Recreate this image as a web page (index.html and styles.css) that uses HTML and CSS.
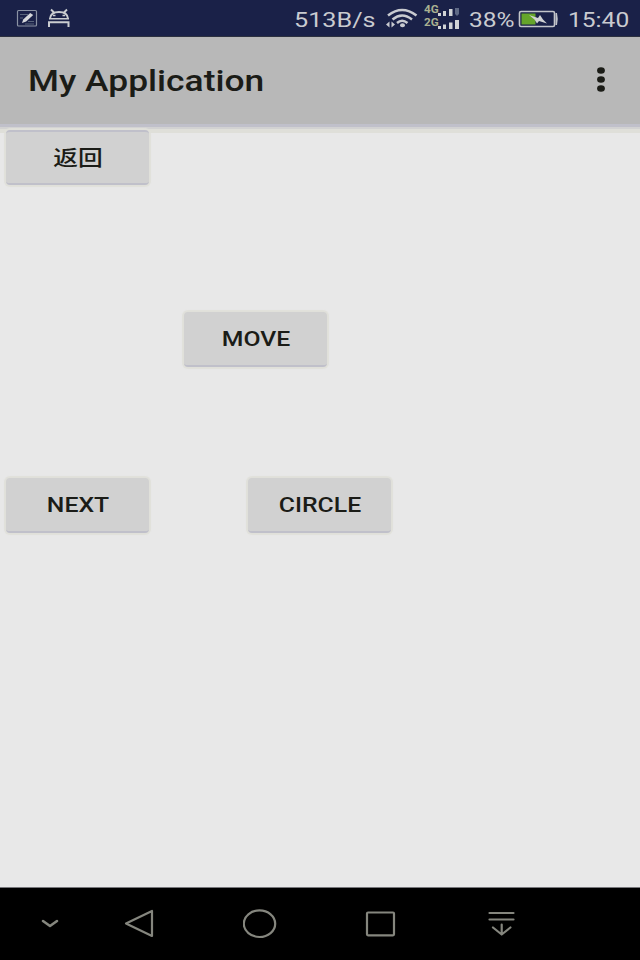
FILE: index.html
```html
<!DOCTYPE html>
<html lang="zh">
<head>
<meta charset="utf-8">
<title>My Application</title>
<link rel="stylesheet" href="styles.css">
</head>
<body>
<div class="screen">
  <header class="status">
    <svg class="notifications" width="72" height="37" viewBox="0 0 72 37" fill="none">
      <rect x="17.5" y="10.5" width="19" height="15.5" rx="1" stroke="#8b93a4" stroke-width="1.2"/>
      <path d="M20 14.5h8M20 18h3M28 21.5h6M25 24h9" stroke="#59647b"/>
      <path d="M22 23l1.200-3.500 7-6.500 3 2-7 6.500z" fill="#d5d7da"/>
      <path d="M50 18.500c.5-4.500 4-6.500 9-6.500s8.500 2 9 6.500M51 9.500l3.500 3.500M67 9.500l-3.500 3.500" stroke="#cacdd0" stroke-width="1.900"/>
      <path d="M53 15.500h2.500M62.500 15.500h2.500M49 18.800h20" stroke="#cacdd0" stroke-width="1.500"/>
      <path d="M49 27v-4.800h19.500v4.800" stroke="#cacdd0" stroke-width="2"/>
    </svg>
    <div class="speed"><span class="wide">513B/s</span></div>
    <svg class="wifi" width="34" height="37" viewBox="0 0 34 37" fill="none" stroke="#c9cbd0">
      <path d="M3 15.500Q17 4.500 31.500 15.500M7.500 19.500Q17 11.500 27 19.500M12 23Q17 18.500 22.500 23" stroke-width="2.500"/>
      <ellipse cx="17.500" cy="25.300" rx="2.500" ry="2" fill="#c9cbd0" stroke="none"/>
      <path d="M4.500 21.500v6l-3.500-3zM6.500 21.500v6l3.500-3z" fill="#c9cbd0" stroke="none"/>
    </svg>
    <div class="networks">
      <div class="network"><span>4G</span><svg width="24" height="12" viewBox="0 0 24 12"><path d="M0 8h3v3H0zM5 6h3v5H5zM11 4h3.500v7H11z" fill="#d1d3d5"/><path d="M17 3h4v6l-2 2-2-2z" fill="#5f6985"/></svg></div>
      <div class="network"><span>2G</span><svg width="24" height="12" viewBox="0 0 24 12"><path d="M0 8h3v3H0zM5 6.500h3V11H5zM11 4.500h3.500V11H11zM17 2h4v9h-4z" fill="#d1d3d5"/></svg></div>
    </div>
    <div class="percent"><span class="wide">38%</span></div>
    <svg class="battery" width="42" height="37" viewBox="0 0 42 37">
      <rect x="1.500" y="11.500" width="35" height="15" rx="1.500" fill="none" stroke="#c3c5ca" stroke-width="1.600"/>
      <path d="M3.500 13.500h14v11h-14z" fill="#65a52a"/>
      <path d="M37.500 13h1.500q1.500 6 0 12h-1.500z" fill="#c3c5ca"/>
      <path d="M11 15l9 3 2-3 3 4.500 4 4-8-2.500-2 2.500-2.500-4z" fill="#d0d2d3"/>
    </svg>
    <div class="clock"><span class="wide">15:40</span></div>
  </header>
  <div class="appbar">
    <h1>My Application</h1>
    <svg width="12" height="28" viewBox="0 0 12 28" fill="#1b1c17"><ellipse cx="6" cy="3.500" rx="3.900" ry="3.300"/><ellipse cx="6" cy="12.500" rx="3.900" ry="3.300"/><ellipse cx="6" cy="21.500" rx="3.900" ry="3.300"/></svg>
  </div>
  <main>
    <button class="back"><span>返回</span></button>
    <button class="move"><span>MOVE</span></button>
    <div class="row">
      <button><span>NEXT</span></button>
      <button><span>CIRCLE</span></button>
    </div>
  </main>
  <nav>
    <svg width="20" height="32" viewBox="0 0 20 32"><path d="M3 13l7 5 7-5" stroke-width="2.600"/></svg>
    <svg width="32" height="32" viewBox="0 0 32 32"><path d="M2 15.500L28 3v25z"/></svg>
    <svg width="36" height="32" viewBox="0 0 36 32"><ellipse cx="16.500" cy="15.700" rx="15.700" ry="13.300"/></svg>
    <svg width="32" height="32" viewBox="0 0 32 32"><rect x="3" y="4.500" width="27" height="22.800" rx="1"/></svg>
    <svg width="28" height="32" viewBox="0 0 28 32"><path d="M1.500 5h24M1.500 11.500h24M13.700 16.500v10M5 19.500l8.700 7 8.700-7"/></svg>
  </nav>
</div>
</body>
</html>
```
FILE: styles.css
```css
* { box-sizing: border-box; }
body { margin: 0; background: #000; font-family: Roboto, "Noto Sans CJK SC", sans-serif; }
.screen { width: 640px; height: 960px; display: flex; flex-direction: column; overflow: hidden; background: #e8e8e8; }
svg { display: block; flex: none; }
.status {
  flex: none;
  height: 37px;
  display: grid;
  grid-template-columns: 294px 91px 39px 45px 49px 50px 72px;
  grid-template-rows: 37px;
  background: #1a2148;
  border-bottom: 1px solid #2c303f;
  color: #c9cbd0;
  font-size: 21px;
  line-height: 40px;
}
.wide { display: inline-block; transform: scaleX(1.17); transform-origin: left; white-space: nowrap; }
.speed .wide { transform: scaleX(1.2); }
.networks { padding-top: 5px; }
.network { height: 13px; display: flex; align-items: flex-start; }
.network span { width: 13.500px; font: bold 10px/9px Roboto, sans-serif; color: #a9b090; transform: scaleX(1.17); transform-origin: left; }
.appbar {
  flex: none;
  height: 87px;
  display: flex;
  align-items: center;
  justify-content: space-between;
  padding: 0 33px 0 28px;
  background: #b8b8b8;
  box-shadow: 0 3px 0 #c0c0ca, 0 5px 0 #d2d2d2, 0 9px 0 #dfdfd9;
}
h1 { margin: 0; color: #1b1c17; font-size: 30px; font-weight: 500; line-height: 36px; transform: scaleX(1.18); transform-origin: left; white-space: nowrap; }
main { flex: none; height: 763px; padding: 6px 6px 0; }
button {
  display: block;
  width: 143px;
  height: 55px;
  padding: 0;
  border: 0;
  border-bottom: 2px solid #c0c0ca;
  border-radius: 4px;
  background: #d1d1d1;
  box-shadow: 0 0 1px 2px #e0e0da;
  color: #1b1c17;
  font: 500 21px/54px Roboto, "Noto Sans CJK SC", sans-serif;
}
button span { display: block; transform: translateX(.5px) scaleX(1.18); }
.back { border-top: 2px solid #c0c0ca; line-height: 53px; }
.move { margin: 127px 0 0 178px; }
.row { display: flex; gap: 99px; margin-top: 111px; }
nav {
  flex: none;
  height: 73px;
  display: grid;
  grid-template-columns: 84px 119px 121px 124px 112px;
  align-items: center;
  padding-left: 40px;
  background: #000;
  border-top: 1px solid #77777b;
}
nav svg { fill: none; stroke: #85867e; stroke-width: 2.2; stroke-linejoin: round; stroke-linecap: round; }
```
